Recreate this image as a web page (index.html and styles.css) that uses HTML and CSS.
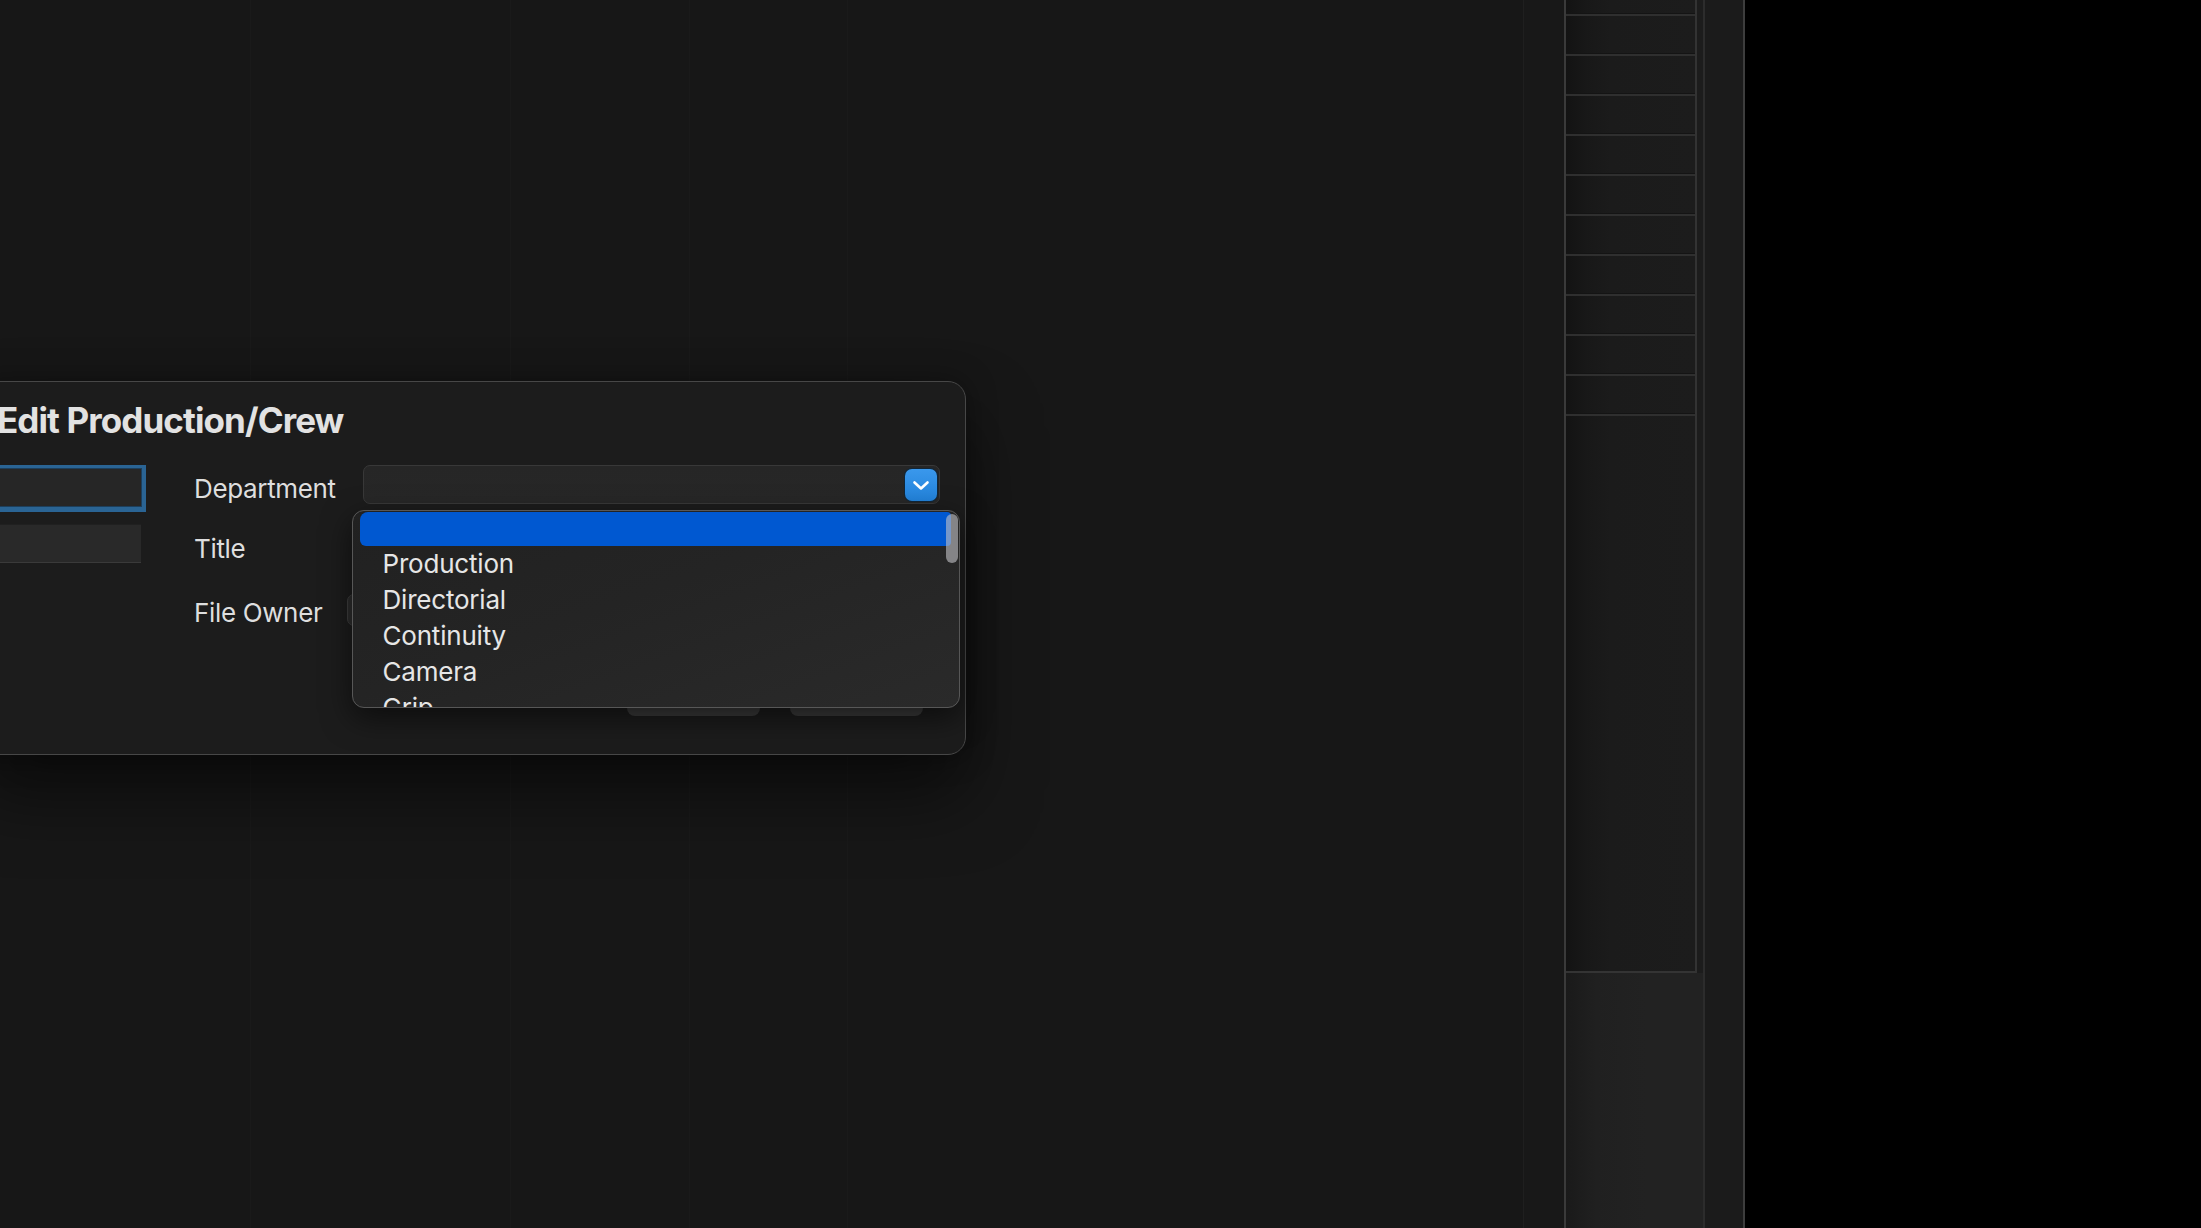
FILE: index.html
```html
<!DOCTYPE html>
<html lang="en">
<head>
<meta charset="utf-8">
<title>Edit Production/Crew</title>
<link rel="stylesheet" href="styles.css">
</head>
<body>
<div class="app">
  <div class="main">
    <div class="canvas"></div>
    <div class="vline"></div>
    <div class="gutter"></div>

    <div class="dialog">
      <h1 class="title">Edit Production/Crew</h1>
      <div class="form">
        <div class="frow r1">
          <div class="lead"><div class="field focused"></div></div>
          <div class="lbl">Department</div>
          <div class="ctl">
            <div class="select">
              <span class="arrow">
                <svg width="32" height="32" viewBox="0 0 32 32"><path d="M9.5 13.5 L16 19.5 L22.5 13.5" fill="none" stroke="#ffffff" stroke-width="2.6" stroke-linecap="round" stroke-linejoin="round"/></svg>
              </span>
            </div>
            <div class="menu">
              <div class="opt sel"></div>
              <div class="opt">Production</div>
              <div class="opt">Directorial</div>
              <div class="opt">Continuity</div>
              <div class="opt">Camera</div>
              <div class="opt">Grip</div>
              <div class="thumb"></div>
            </div>
          </div>
        </div>
        <div class="frow r2">
          <div class="lead"><div class="field plain"></div></div>
          <div class="lbl lbl-title">Title</div>
          <div class="ctl"><div class="textfield"></div></div>
        </div>
        <div class="frow r3">
          <div class="lead"></div>
          <div class="lbl lbl-owner">File Owner</div>
          <div class="ctl"><div class="popup"></div></div>
        </div>
        <div class="frow r4">
          <div class="lead"></div>
          <div></div>
          <div class="ctl buttons"><div class="btn"></div><div class="btn"></div></div>
        </div>
      </div>
    </div>
  </div>

  <div class="sidebar">
    <div class="col">
      <div class="table">
        <div class="trow first"></div>
        <div class="trow"></div>
        <div class="trow"></div>
        <div class="trow"></div>
        <div class="trow"></div>
        <div class="trow"></div>
        <div class="trow"></div>
        <div class="trow"></div>
        <div class="trow"></div>
        <div class="trow"></div>
        <div class="trow"></div>
      </div>
      <div class="filler"></div>
    </div>
    <div class="divider"></div>
    <div class="strip"></div>
  </div>
  <div class="void"></div>
</div>
</body>
</html>
```

FILE: styles.css
```css
* { box-sizing: border-box; }
html, body { margin: 0; padding: 0; }
body {
  background: #000;
  font-family: Inter, "Noto Sans", "Liberation Sans", sans-serif;
  color: #e4e4e4;
  overflow: hidden;
}
.app {
  display: flex;
  width: 2201px;
  height: 1228px;
}

/* main area */
.main {
  position: relative;
  width: 1564px;
  flex: 0 0 1564px;
  display: flex;
  background: #171717;
}
.canvas {
  flex: 0 0 1523px;
  background:
    linear-gradient(90deg, transparent 250px, #1a1a1a 250px, #1a1a1a 251px, transparent 251px),
    linear-gradient(90deg, transparent 510px, #1a1a1a 510px, #1a1a1a 511px, transparent 511px),
    linear-gradient(90deg, transparent 689px, #1a1a1a 689px, #1a1a1a 690px, transparent 690px),
    linear-gradient(90deg, transparent 847px, #1a1a1a 847px, #1a1a1a 848px, transparent 848px),
    #171717;
}
.vline { flex: 0 0 1px; background: #1f1f1f; }
.gutter { flex: 1; background: #181818; }

/* dialog */
.dialog {
  position: absolute;
  left: -24px;
  top: 381px;
  width: 990px;
  background: #1c1c1c;
  border: 1px solid #474747;
  border-radius: 18px;
  padding: 17px 25px 38px 22px;
  box-shadow: 0 40px 70px rgba(0,0,0,0.5), 0 0 30px rgba(0,0,0,0.35);
  z-index: 5;
}
.title {
  margin: 0 0 22px -2px;
  font-size: 35px;
  line-height: 42px;
  font-weight: 700;
  letter-spacing: -0.9px;
  color: #e2e2e2;
  white-space: nowrap;
}
.form { display: flex; flex-direction: column; }
.frow {
  display: grid;
  grid-template-columns: 195px 169px 577px;
}
.r1 { height: 51px; }
.r2 { height: 39px; margin-top: 10px; }
.r3 { height: 32px; margin-top: 31px; }
.r4 { height: 36px; margin-top: 54px; }

.lbl {
  font-size: 26px;
  line-height: 51px;
  letter-spacing: -0.35px;
  color: #dedede;
  white-space: nowrap;
}
.lbl-title { line-height: 39px; margin-top: 5px; }
.lbl-owner { line-height: 32px; margin-top: 3px; }

.field {
  height: 39px;
  background: #262626;
}
.field.focused {
  width: 143px;
  margin-top: 5px;
  border: 1px solid #1d3f5c;
  box-shadow: 0 1px 0 4px #2a6494;
}
.field.plain {
  width: 142px;
  background: #292929;
  border-bottom: 1px solid #3a3a3a;
  border-top: 1px solid #202020;
}

.ctl { position: relative; }
.select {
  margin-top: 2px;
  height: 39px;
  border: 1px solid #383838;
  border-radius: 7px;
  background: linear-gradient(#262626, #272727);
  display: flex;
  justify-content: flex-end;
  align-items: center;
  padding-right: 2px;
}
.arrow {
  width: 32px;
  height: 32px;
  border-radius: 7px;
  background: linear-gradient(#3a98ec, #2282da);
  box-shadow: 0 0 0 1px #10273a;
  display: block;
}
.arrow svg { display: block; }

.textfield {
  height: 39px;
  background: #262626;
  border: 1px solid #333;
}
.popup {
  margin-left: -16px;
  height: 32px;
  border-radius: 7px;
  background: #2c2c2c;
  border: 1px solid #3e3e3e;
}
.buttons {
  display: flex;
  justify-content: flex-end;
  gap: 30px;
  padding-right: 17px;
}
.btn {
  width: 133px;
  height: 36px;
  border-radius: 8px;
  background: #3b3b3b;
}

/* dropdown menu */
.menu {
  position: absolute;
  left: -11px;
  top: 47px;
  width: 608px;
  height: 198px;
  border: 1.5px solid #575757;
  border-radius: 12px;
  background: linear-gradient(160deg, #212121 0%, #242424 45%, #2a2a2a 100%);
  box-shadow: 0 10px 30px rgba(0,0,0,0.55);
  overflow: hidden;
  padding: 0.5px 8px 0 6.5px;
  z-index: 10;
}
.opt {
  height: 36px;
  line-height: 36px;
  padding-left: 23px;
  font-size: 26px;
  letter-spacing: -0.2px;
  color: #e6e6e6;
  white-space: nowrap;
}
.opt.sel {
  height: 34px;
  background: #0058d1;
  border-radius: 8px 4px 4px 6px;
}
.thumb {
  position: absolute;
  top: 2.5px;
  right: 1.5px;
  width: 12px;
  height: 49px;
  border-radius: 6px;
  background: rgba(190,190,195,0.62);
}

/* sidebar */
.sidebar {
  flex: 0 0 181px;
  display: flex;
  border-left: 2px solid #3a3a3a;
  border-right: 2px solid #3d3d3d;
  background: #1c1c1c;
}
.col {
  flex: 0 0 137px;
  display: flex;
  flex-direction: column;
  background: #1c1c1c;
}
.table {
  width: 131px;
  height: 973px;
  border-right: 2px solid #333;
  border-bottom: 2px solid #343434;
  background: linear-gradient(90deg, #131313 0px, #181818 20px, #1b1b1b 45px, #1c1c1c 100%);
}
.trow {
  height: 40px;
  border-bottom: 2px solid #2f2f2f;
  box-shadow: inset 0 -1px 0 #141414;
}
.trow.first { height: 16px; }
.filler {
  flex: 1;
  background: linear-gradient(90deg, #1a1a1a 0px, #202020 30px, #222 80px, #222 100%);
}
.divider { flex: 0 0 2px; background: #2c2c2c; }
.strip { flex: 1; background: #1b1b1b; }

.void { flex: 1; background: #000; }
```
